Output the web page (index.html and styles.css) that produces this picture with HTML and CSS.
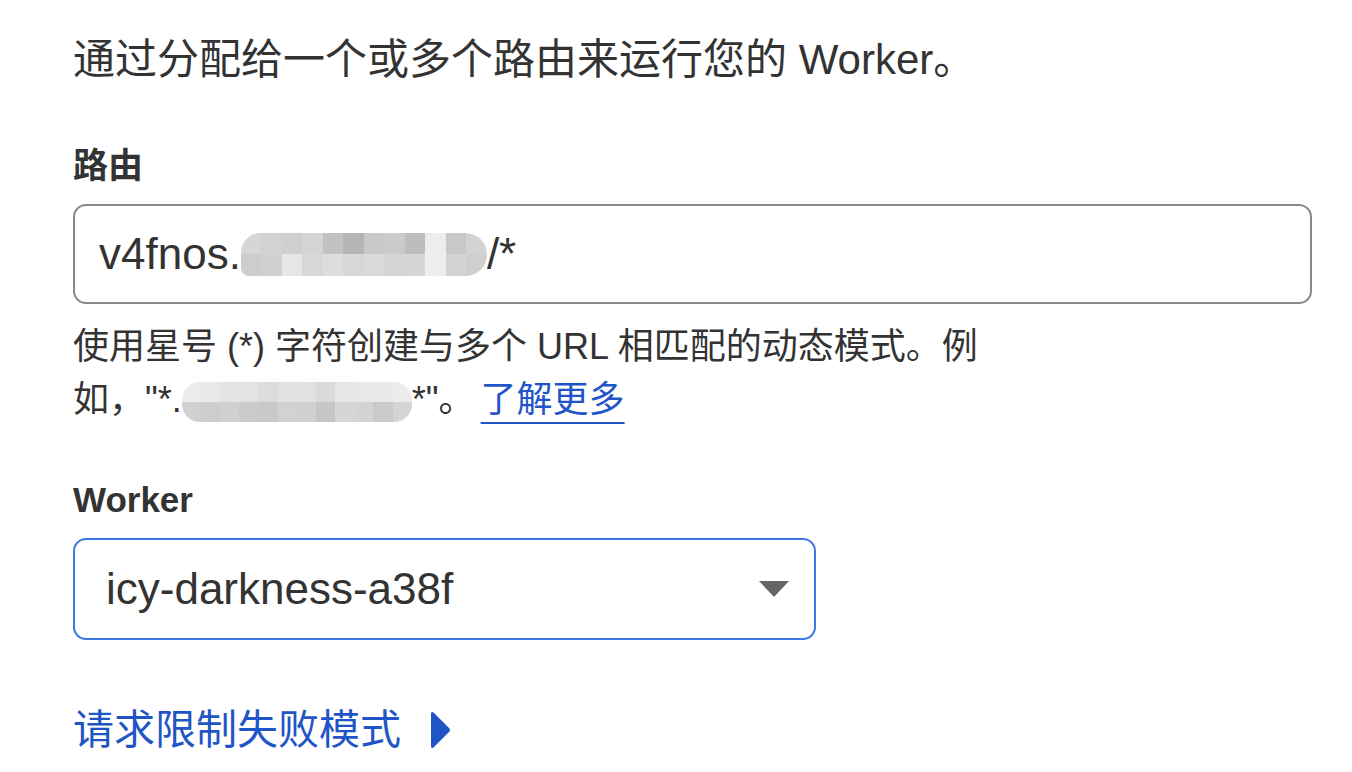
FILE: index.html
```html
<!DOCTYPE html>
<html lang="zh-CN">
<head>
  <meta charset="UTF-8" />
  <meta name="viewport" content="width=device-width, initial-scale=1" />
  <title>添加路由</title>
  <link rel="stylesheet" href="styles.css">
</head>

<body>
  <div class="route-form">
    <p class="intro">通过分配给一个或多个路由来运行您的 Worker。</p>

    <!-- 路由 -->
    <div class="field">
      <label class="field-label" for="route">路由</label>
      <div class="text-input" id="route">
        v4fnos.<span class="mosaic mosaic-lg">
          <i style="background:#d6d6d6"></i><i style="background:#d2d2d2"></i><i style="background:#cfcfcf"></i><i style="background:#d4d4d4"></i><i style="background:#c2c2c2"></i><i style="background:#b5b5b5"></i><i style="background:#c9c9c9"></i><i style="background:#cbcbcb"></i><i style="background:#bdbdbd"></i><i style="background:#ededed"></i><i style="background:#c8c8c8"></i><i style="background:#d3d3d3"></i>
          <i style="background:#cdcdcd"></i><i style="background:#d0d0d0"></i><i style="background:#e6e6e6"></i><i style="background:#d8d8d8"></i><i style="background:#dddddd"></i><i style="background:#d7d7d7"></i><i style="background:#d9d9d9"></i><i style="background:#d4d4d4"></i><i style="background:#d6d6d6"></i><i style="background:#eeeeee"></i><i style="background:#d3d3d3"></i><i style="background:#cfcfcf"></i>
        </span>/*
      </div>
      <p class="help">
        使用星号 (*) 字符创建与多个 URL 相匹配的动态模式。例如，"*.<span class="mosaic mosaic-sm">
          <i style="background:#ececec"></i><i style="background:#e9e9e9"></i><i style="background:#e4e4e4"></i><i style="background:#e3e3e3"></i><i style="background:#dcdcdc"></i><i style="background:#e2e2e2"></i><i style="background:#e1e1e1"></i><i style="background:#dadada"></i><i style="background:#e6e6e6"></i><i style="background:#e8e8e8"></i><i style="background:#eaeaea"></i><i style="background:#ececec"></i>
          <i style="background:#d1d1d1"></i><i style="background:#cdcdcd"></i><i style="background:#d0d0d0"></i><i style="background:#cbcbcb"></i><i style="background:#c9c9c9"></i><i style="background:#d2d2d2"></i><i style="background:#d0d0d0"></i><i style="background:#c6c6c6"></i><i style="background:#d6d6d6"></i><i style="background:#d3d3d3"></i><i style="background:#cacaca"></i><i style="background:#d4d4d4"></i>
        </span>*"。<a class="learn-more" href="#">了解更多</a>
      </p>
    </div>

    <!-- Worker -->
    <div class="field">
      <label class="field-label" for="worker">Worker</label>
      <div class="select-input" id="worker">
        <span>icy-darkness-a38f</span>
        <svg class="select-arrow" width="30" height="16" viewBox="0 0 30 16" aria-hidden="true">
          <path d="M0 0 H30 L15 16 Z" fill="#666"/>
        </svg>
      </div>
    </div>

    <a class="expander" href="#">
      请求限制失败模式
      <svg class="expander-arrow" width="22" height="38" viewBox="0 0 22 38" aria-hidden="true">
        <path d="M2 3 Q2 0 4.5 1.6 L20 17 Q22 19 20 21 L4.5 36.4 Q2 38 2 35 Z" fill="#1f55c6"/>
      </svg>
    </a>
  </div>
</body>
</html>
```

FILE: styles.css
```css
body {
  margin: 0;
  padding: 0;
  background: #fff;
  color: #333;
  font-family: "Liberation Sans", "Noto Sans CJK SC", sans-serif;
}

.route-form {
  padding: 30px 40px 0 73px;
}

.intro {
  margin: 0;
  font-size: 42px;
  line-height: 60px;
}

/* Form fields */
.field {
  margin-top: 54px;
}

.field + .field {
  margin-top: 52px;
}

.field-label {
  display: block;
  font-size: 35px;
  font-weight: 700;
  line-height: 44px;
  margin-bottom: 16px;
}

.text-input,
.select-input {
  box-sizing: border-box;
  display: flex;
  align-items: center;
  height: 100px;
  border: 2px solid #888;
  border-radius: 13px;
  padding: 0 24px;
  font-size: 44px;
  color: #333;
  white-space: nowrap;
}

.text-input {
  width: 1239px;
}

.select-input {
  width: 743px;
  height: 102px;
  padding-left: 31px;
  padding-right: 25px;
  justify-content: space-between;
  border-color: #3b78e7;
}

.field-label + .select-input {
  margin-top: 4px;
}

.help {
  margin: 16px 0 0;
  max-width: 920px;
  font-size: 36px;
  line-height: 53px;
}

.learn-more {
  margin-left: 6px;
  color: #1f55c6;
  text-decoration: underline;
  text-decoration-thickness: 2px;
  text-underline-offset: 10px;
}

/* Pixelated (redacted) text */
.mosaic {
  display: inline-grid;
  grid-template-rows: 1fr 1fr;
  vertical-align: middle;
  overflow: hidden;
}

.mosaic i {
  display: block;
}

.mosaic-lg {
  grid-template-columns: repeat(12, 1fr);
  width: 246px;
  height: 43px;
  border-radius: 20px 22px 22px 8px;
}

.mosaic-sm {
  grid-template-columns: repeat(12, 1fr);
  width: 230px;
  height: 40px;
  border-radius: 18px;
}

/* Collapsible section link */
.expander {
  display: inline-flex;
  align-items: center;
  gap: 28px;
  margin-top: 65px;
  font-size: 41px;
  line-height: 50px;
  color: #1f55c6;
  text-decoration: none;
}
```
